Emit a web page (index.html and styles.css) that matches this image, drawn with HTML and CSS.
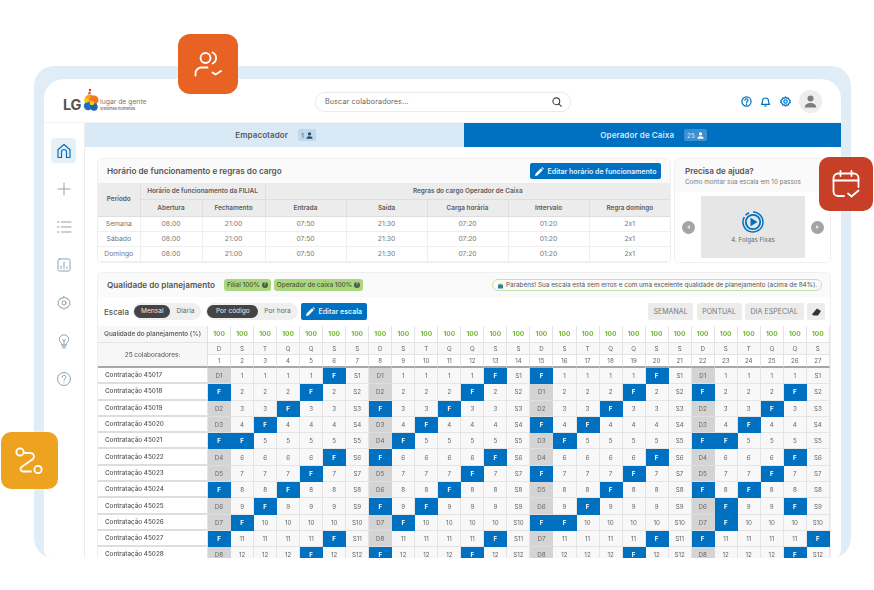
FILE: index.html
```html
<!DOCTYPE html>
<html lang="pt-BR">
<head>
<meta charset="utf-8">
<title>LG lugar de gente - Escala</title>
<link rel="stylesheet" href="styles.css">
</head>
<body>
<div class="stage">
  <div class="float float-orange">
    <svg width="29" height="26" viewBox="0 0 29 26" class="ico-w"><circle cx="11.5" cy="7" r="5"/><path d="M18.5 1.5a6 6 0 0 1 0 11"/><path d="M1.5 24.5v-2a6 6 0 0 1 6-6h6"/><path d="M18.5 21.5l3 2 5.5-3.5"/></svg>
  </div>
  <div class="float float-red">
    <svg width="29" height="29" viewBox="0 0 29 29" class="ico-w"><path d="M12 26H6a4.500 4.500 0 0 1-4.500-4.500V8A4.500 4.500 0 0 1 6 3.500h16A4.500 4.500 0 0 1 26.500 8v9"/><path d="M1.500 10.500h25"/><path d="M8.500 1v5M19.500 1v5"/><path d="M16 23.500l3.500 3 7-6"/></svg>
  </div>
  <div class="float float-yellow">
    <svg width="28" height="28" viewBox="0 0 28 28" class="ico-w"><circle cx="5" cy="5" r="3.700"/><circle cx="23" cy="22.500" r="3.700"/><path d="M10 6h5.500a3.500 3.500 0 0 1 2.500 6L6.500 20a2.500 2.500 0 0 0 1.500 4.500H16"/></svg>
  </div>

  <div class="frame">
    <div class="app">
      <header class="top">
        <div class="logo">
          <span class="lg">LG</span>
          <svg class="blob" width="17" height="24" viewBox="0 0 17 24"><circle cx="7" cy="2" r="1.200" fill="#c8372d"/><circle cx="6.500" cy="5" r="1.300" fill="#d9534a"/><circle cx="6" cy="8" r="1.500" fill="#e9482a"/><circle cx="7" cy="12" r="5.500" fill="#f6a313"/><circle cx="11" cy="12" r="4.500" fill="#f0771f"/><circle cx="5" cy="18" r="4.200" fill="#1f6fc0"/><circle cx="11" cy="19" r="3.700" fill="#1a64ad"/><circle cx="9" cy="15" r="2.300" fill="#f7c519"/><circle cx="3.500" cy="12.500" r="2.300" fill="#f8c81e"/></svg>
          <div class="logo-txt"><span class="lg-a">lugar de gente</span><span class="lg-b">sistemas humanos</span></div>
        </div>
        <div class="search">
          <span>Buscar colaboradores...</span>
          <svg width="10" height="10" viewBox="0 0 10 10" class="ico-dark"><circle cx="4.300" cy="4.300" r="3.400"/><path d="M6.800 6.800L9.300 9.300"/></svg>
        </div>
        <div class="top-right">
          <svg width="11" height="11" viewBox="0 0 11 11" class="ico-blue"><circle cx="5.500" cy="5.500" r="4.600"/><path d="M4 4.300a1.500 1.500 0 1 1 2.300 1.300c-.5.300-.8.600-.8 1.100"/><path d="M5.500 8.100v.3"/></svg>
          <svg width="11" height="11" viewBox="0 0 11 11" class="ico-blue"><path d="M1.500 8.300c1-.8 1-1.800 1-3.300a3 3 0 0 1 6 0c0 1.500 0 2.500 1 3.300z"/><path d="M4.500 10h2"/></svg>
          <svg width="11" height="11" viewBox="0 0 11 11" class="ico-blue"><circle cx="5.500" cy="5.500" r="1.700"/><path d="M5.500.8l1 1.300 1.700-.2.600 1.600 1.500.9-.6 1.100.6 1.100-1.500.9-.6 1.600-1.700-.2-1 1.300-1-1.300-1.700.2-.6-1.600-1.500-.9.600-1.100-.6-1.100 1.500-.9.600-1.600 1.700.2z"/></svg>
          <div class="avatar"><svg width="13" height="13" viewBox="0 0 13 13" fill="#7d7d7d"><circle cx="6.500" cy="3.500" r="3"/><path d="M.8 12.500c0-3 2.500-4.500 5.700-4.500s5.700 1.500 5.700 4.500z"/></svg></div>
        </div>
      </header>

      <nav class="side">
        <div class="nav-btn on"><svg width="16" height="16" viewBox="0 0 16 16" class="ico-nav-on"><path d="M2 14.500V6.800L8 1.500l6 5.300v7.700h-3.500V9a2.500 2.500 0 0 0-5 0v5.500z"/></svg></div>
        <div class="nav-btn"><svg width="16" height="16" viewBox="0 0 16 16" class="ico-nav"><path d="M8 2v12M2 8h12"/></svg></div>
        <div class="nav-btn"><svg width="16" height="16" viewBox="0 0 16 16" class="ico-nav"><path d="M5.500 3H15M5.500 8H15M5.500 13H15M1.500 3h1.500M1.500 8h1.500M1.500 13h1.500"/></svg></div>
        <div class="nav-btn"><svg width="16" height="16" viewBox="0 0 16 16" class="ico-nav"><rect x="2" y="2" width="12" height="12" rx="1.500"/><path d="M5 11.500V9M8 11.500V5M11 11.500V10"/></svg></div>
        <div class="nav-btn"><svg width="16" height="16" viewBox="0 0 16 16" class="ico-nav"><circle cx="8" cy="8" r="2"/><path d="M8 1.500l1.300 1.800 2.200-.3.800 2.100 1.900 1.200L13.400 8l.8 1.700-1.900 1.200-.8 2.100-2.200-.3L8 14.500l-1.300-1.800-2.200.3-.8-2.100-1.900-1.200L2.600 8l-.8-1.700 1.900-1.200.8-2.100 2.200.3z"/></svg></div>
        <div class="nav-btn"><svg width="16" height="16" viewBox="0 0 16 16" class="ico-nav"><path d="M5.500 11.500v-1.300C4.200 9.300 3.300 8 3.300 6.500a4.700 4.700 0 0 1 9.400 0c0 1.500-.9 2.800-2.200 3.700v1.300z"/><path d="M6 13.200h4M6.800 15h2.400M6.500 6.500L8 8l1.500-1.500M8 8v3.500"/></svg></div>
        <div class="nav-btn"><svg width="16" height="16" viewBox="0 0 16 16" class="ico-nav"><circle cx="8" cy="8" r="6.500"/><path d="M6 6.200a2 2 0 1 1 3 1.700c-.7.400-1 .8-1 1.500"/><path d="M8 11.300v.4"/></svg></div>
      </nav>

      <main class="main">
        <div class="tabs">
          <div class="tab">Empacotador <span class="tab-badge">1 <svg width="7" height="7" viewBox="0 0 13 13" fill="#33475a"><circle cx="6.500" cy="3.500" r="3"/><path d="M.8 12.500c0-3 2.500-4.500 5.700-4.500s5.700 1.500 5.700 4.500z"/></svg></span></div>
          <div class="tab active">Operador de Caixa <span class="tab-badge">25 <svg width="7" height="7" viewBox="0 0 13 13" fill="#fff"><circle cx="6.500" cy="3.500" r="3"/><path d="M.8 12.500c0-3 2.500-4.500 5.700-4.500s5.700 1.500 5.700 4.500z"/></svg></span></div>
        </div>

        <div class="content">
          <div class="row-top">
            <section class="card">
              <div class="card-head h25">
                <h2>Horário de funcionamento e regras do cargo</h2>
                <button class="btn-blue wide"><svg width="9" height="9" viewBox="0 0 9 9" fill="#fff"><path d="M0 9l.6-2.400L6 1.200 7.800 3 2.400 8.400zM6.600.6L7.200 0 9 1.800l-.6.600z"/></svg>Editar horário de funcionamento</button>
              </div>
              <table class="rules">
                <colgroup><col class="c42"><col class="c62"><col class="c63"><col class="c81"><col class="c81"><col class="c81"><col class="c81"><col class="c81"></colgroup>
                <thead>
                  <tr><th rowspan="2">Período</th><th colspan="2">Horário de funcionamento da FILIAL</th><th colspan="5">Regras do cargo Operador de Caixa</th></tr>
                  <tr class="tall"><th>Abertura</th><th>Fechamento</th><th>Entrada</th><th>Saída</th><th>Carga horária</th><th>Intervalo</th><th>Regra domingo</th></tr>
                </thead>
                <tbody>
                  <tr><td>Semana</td><td>08:00</td><td>21:00</td><td>07:50</td><td>21:30</td><td>07:20</td><td>01:20</td><td>2x1</td></tr>
                  <tr><td>Sábado</td><td>08:00</td><td>21:00</td><td>07:50</td><td>21:30</td><td>07:20</td><td>01:20</td><td>2x1</td></tr>
                  <tr><td>Domingo</td><td>08:00</td><td>21:00</td><td>07:50</td><td>21:30</td><td>07:20</td><td>01:20</td><td>2x1</td></tr>
                </tbody>
              </table>
            </section>

            <section class="card help">
              <div class="help-head">
                <h3>Precisa de ajuda?</h3>
                <p>Como montar sua escala em 10 passos</p>
              </div>
              <div class="carousel">
                <span class="arrow"><i class="tri-l"></i></span>
                <div class="slide">
                  <svg width="22" height="22" viewBox="0 0 22 22"><path d="M11 1a10 10 0 1 1-8.700 5" fill="none" stroke="#0070c0" stroke-width="1.500"/><path d="M3.500 4.300A10 10 0 0 1 7 1.800" fill="none" stroke="#0070c0" stroke-width="1.500"/><circle cx="11" cy="11" r="7.200" fill="none" stroke="#0070c0" stroke-width="1.800"/><path d="M8.500 6.800v8.400L15.500 11z" fill="#0070c0"/></svg>
                  <span>4. Folgas Fixas</span>
                </div>
                <span class="arrow"><i class="tri-r"></i></span>
              </div>
            </section>
          </div>

          <section class="card plan">
            <div class="card-head h24">
              <h2 class="plan-title">Qualidade do planejamento</h2>
              <span class="pill-green">Filial 100% <i class="dot">?</i></span>
              <span class="pill-green">Operador de caixa 100% <i class="dot">?</i></span>
              <span class="msg"><svg width="7" height="7" viewBox="0 0 7 7"><path d="M1 3h5v3.500H1z" fill="#2b7fb8"/><path d="M1 3c.5-1.800 4.500-1.800 5 0z" fill="#7fb04a"/></svg>Parabéns! Sua escala está sem erros e com uma excelente qualidade de planejamento (acima de 84%).</span>
            </div>
            <div class="toolbar">
              <span class="tb-label">Escala</span>
              <div class="toggle"><span class="tg on">Mensal</span><span class="tg">Diária</span></div>
              <div class="toggle second"><span class="tg on">Por código</span><span class="tg">Por hora</span></div>
              <button class="btn-blue esc"><svg width="9" height="9" viewBox="0 0 9 9" fill="#fff"><path d="M0 9l.6-2.400L6 1.200 7.800 3 2.400 8.400zM6.600.6L7.200 0 9 1.800l-.6.600z"/></svg>Editar escala</button>
              <div class="tb-right">
                <button class="btn-gray">SEMANAL</button>
                <button class="btn-gray">PONTUAL</button>
                <button class="btn-gray">DIA ESPECIAL</button>
                <button class="btn-gray eraser"><svg width="9" height="8" viewBox="0 0 9 8" fill="#333"><path d="M5 .5L9 3 6 7.500H1.500L0 6.300z"/></svg></button>
              </div>
            </div>

            <div class="grid">
              <div class="lbl">Qualidade do planejamento (%)</div>
              <div class="p">100</div><div class="p">100</div><div class="p">100</div><div class="p">100</div><div class="p">100</div><div class="p">100</div><div class="p">100</div><div class="p">100</div><div class="p">100</div><div class="p">100</div><div class="p">100</div><div class="p">100</div><div class="p">100</div><div class="p">100</div><div class="p">100</div><div class="p">100</div><div class="p">100</div><div class="p">100</div><div class="p">100</div><div class="p">100</div><div class="p">100</div><div class="p">100</div><div class="p">100</div><div class="p">100</div><div class="p">100</div><div class="p">100</div><div class="p">100</div>

              <div class="lbl cnt">25 colaboradores:</div>
              <div>D</div><div>S</div><div>T</div><div>Q</div><div>Q</div><div>S</div><div>S</div><div>D</div><div>S</div><div>T</div><div>Q</div><div>Q</div><div>S</div><div>S</div><div>D</div><div>S</div><div>T</div><div>Q</div><div>Q</div><div>S</div><div>S</div><div>D</div><div>S</div><div>T</div><div>Q</div><div>Q</div><div>S</div>
              <div class="n">1</div><div class="n">2</div><div class="n">3</div><div class="n">4</div><div class="n">5</div><div class="n">6</div><div class="n">7</div><div class="n">8</div><div class="n">9</div><div class="n">10</div><div class="n">11</div><div class="n">12</div><div class="n">13</div><div class="n">14</div><div class="n">15</div><div class="n">16</div><div class="n">17</div><div class="n">18</div><div class="n">19</div><div class="n">20</div><div class="n">21</div><div class="n">22</div><div class="n">23</div><div class="n">24</div><div class="n">25</div><div class="n">26</div><div class="n">27</div>

              <div class="name">Contratação 45017</div>
              <div class="d">D1</div><div>1</div><div>1</div><div>1</div><div>1</div><div class="f">F</div><div>S1</div><div class="d">D1</div><div>1</div><div>1</div><div>1</div><div>1</div><div class="f">F</div><div>S1</div><div class="f">F</div><div>1</div><div>1</div><div>1</div><div>1</div><div class="f">F</div><div>S1</div><div class="d">D1</div><div>1</div><div>1</div><div>1</div><div>1</div><div>S1</div>

              <div class="name">Contratação 45018</div>
              <div class="f">F</div><div>2</div><div>2</div><div>2</div><div class="f">F</div><div>2</div><div>S2</div><div class="d">D2</div><div>2</div><div>2</div><div>2</div><div class="f">F</div><div>2</div><div>S2</div><div class="d">D1</div><div>2</div><div>2</div><div>2</div><div class="f">F</div><div>2</div><div>S2</div><div class="f">F</div><div>2</div><div>2</div><div>2</div><div class="f">F</div><div>S2</div>

              <div class="name">Contratação 45019</div>
              <div class="d">D2</div><div>3</div><div>3</div><div class="f">F</div><div>3</div><div>3</div><div>S3</div><div class="f">F</div><div>3</div><div>3</div><div class="f">F</div><div>3</div><div>3</div><div>S3</div><div class="d">D2</div><div>3</div><div>3</div><div class="f">F</div><div>3</div><div>3</div><div>S3</div><div class="d">D2</div><div>3</div><div>3</div><div class="f">F</div><div>3</div><div>S3</div>

              <div class="name">Contratação 45020</div>
              <div class="d">D3</div><div>4</div><div class="f">F</div><div>4</div><div>4</div><div>4</div><div>S4</div><div class="d">D3</div><div>4</div><div class="f">F</div><div>4</div><div>4</div><div>4</div><div>S4</div><div class="f">F</div><div>4</div><div class="f">F</div><div>4</div><div>4</div><div>4</div><div>S4</div><div class="d">D3</div><div>4</div><div class="f">F</div><div>4</div><div>4</div><div>S4</div>

              <div class="name">Contratação 45021</div>
              <div class="f">F</div><div class="f">F</div><div>5</div><div>5</div><div>5</div><div>5</div><div>S5</div><div class="d">D4</div><div class="f">F</div><div>5</div><div>5</div><div>5</div><div>5</div><div>S5</div><div class="d">D3</div><div class="f">F</div><div>5</div><div>5</div><div>5</div><div>5</div><div>S5</div><div class="f">F</div><div class="f">F</div><div>5</div><div>5</div><div>5</div><div>S5</div>

              <div class="name">Contratação 45022</div>
              <div class="d">D4</div><div>6</div><div>6</div><div>6</div><div>6</div><div class="f">F</div><div>S6</div><div class="f">F</div><div>6</div><div>6</div><div>6</div><div>6</div><div class="f">F</div><div>S6</div><div class="d">D4</div><div>6</div><div>6</div><div>6</div><div>6</div><div class="f">F</div><div>S6</div><div class="d">D4</div><div>6</div><div>6</div><div>6</div><div class="f">F</div><div>S6</div>

              <div class="name">Contratação 45023</div>
              <div class="d">D5</div><div>7</div><div>7</div><div>7</div><div class="f">F</div><div>7</div><div>S7</div><div class="d">D5</div><div>7</div><div>7</div><div>7</div><div class="f">F</div><div>7</div><div>S7</div><div class="f">F</div><div>7</div><div>7</div><div>7</div><div class="f">F</div><div>7</div><div>S7</div><div class="d">D5</div><div>7</div><div>7</div><div class="f">F</div><div>7</div><div>S7</div>

              <div class="name">Contratação 45024</div>
              <div class="f">F</div><div>8</div><div>8</div><div class="f">F</div><div>8</div><div>8</div><div>S8</div><div class="d">D6</div><div>8</div><div>8</div><div class="f">F</div><div>8</div><div>8</div><div>S8</div><div class="d">D5</div><div>8</div><div>8</div><div class="f">F</div><div>8</div><div>8</div><div>S8</div><div class="f">F</div><div>8</div><div class="f">F</div><div>8</div><div>8</div><div>S8</div>

              <div class="name">Contratação 45025</div>
              <div class="d">D6</div><div>9</div><div class="f">F</div><div>9</div><div>9</div><div>9</div><div>S9</div><div class="f">F</div><div>9</div><div class="f">F</div><div>9</div><div>9</div><div>9</div><div>S9</div><div class="d">D6</div><div>9</div><div class="f">F</div><div>9</div><div>9</div><div>9</div><div>S9</div><div class="d">D6</div><div class="f">F</div><div>9</div><div>9</div><div class="f">F</div><div>S9</div>

              <div class="name">Contratação 45026</div>
              <div class="d">D7</div><div class="f">F</div><div>10</div><div>10</div><div>10</div><div>10</div><div>S10</div><div class="d">D7</div><div class="f">F</div><div>10</div><div>10</div><div>10</div><div>10</div><div>S10</div><div class="f">F</div><div class="f">F</div><div>10</div><div>10</div><div>10</div><div>10</div><div>S10</div><div class="d">D7</div><div class="f">F</div><div>10</div><div>10</div><div>10</div><div>S10</div>

              <div class="name">Contratação 45027</div>
              <div class="f">F</div><div>11</div><div>11</div><div>11</div><div>11</div><div class="f">F</div><div>S11</div><div class="d">D8</div><div>11</div><div>11</div><div>11</div><div>11</div><div class="f">F</div><div>S11</div><div class="d">D7</div><div>11</div><div>11</div><div>11</div><div>11</div><div class="f">F</div><div>S11</div><div class="f">F</div><div>11</div><div>11</div><div>11</div><div>11</div><div class="f">F</div>

              <div class="name">Contratação 45028</div>
              <div class="d">D8</div><div>12</div><div>12</div><div>12</div><div class="f">F</div><div>12</div><div>S12</div><div class="f">F</div><div>12</div><div>12</div><div>12</div><div class="f">F</div><div>12</div><div>S12</div><div class="d">D8</div><div>12</div><div>12</div><div>12</div><div class="f">F</div><div>12</div><div>S12</div><div class="d">D8</div><div>12</div><div>12</div><div>12</div><div class="f">F</div><div>S12</div>
            </div>
          </section>
        </div>
      </main>
    </div>
  </div>
</div>
</body>
</html>
```
FILE: styles.css
```css
* { box-sizing: border-box; }
html, body { margin: 0; padding: 0; background: #fff; overflow: hidden; }
body { width: 874px; height: 590px; font-family: "Inter", "Liberation Sans", sans-serif; font-feature-settings: "calt" 0; color: #555; }
h2, h3, p { margin: 0; }
button { font-family: inherit; font-feature-settings: inherit; border: 0; padding: 0; }
svg { display: block; flex: none; }

.stage { position: relative; width: 874px; height: 590px; padding: 66px 23px 32px 34px; filter: blur(.4px); }
.frame { height: 492px; background: #e0edf6; border-radius: 20px; padding: 13px 10px 0; overflow: hidden; }
.app { height: 479px; background: #fff; border-radius: 20px 20px 8px 8px; overflow: hidden; display: grid; grid-template-columns: 41px 1fr; grid-template-rows: 44px 1fr; }

.float { position: absolute; z-index: 5; display: flex; align-items: center; justify-content: center; border-radius: 10px; box-shadow: 0 0 0 1px rgba(255,255,255,.3); }
.float-orange { left: 178px; top: 33.5px; width: 60px; height: 60px; background: #e86224; border-radius: 12px; }
.float-red { left: 819px; top: 157px; width: 54px; height: 54px; background: #c63f26; }
.float-yellow { left: 1px; top: 432px; width: 56.500px; height: 57px; background: #eea320; }
.ico-w { fill: none; stroke: #fff; stroke-width: 1.8; stroke-linecap: round; stroke-linejoin: round; }
.ico-dark { fill: none; stroke: #444; stroke-width: 1.1; stroke-linecap: round; }
.ico-blue { fill: none; stroke: #0070c0; stroke-width: 1.2; stroke-linecap: round; stroke-linejoin: round; }
.ico-nav { fill: none; stroke: #8ba3ae; stroke-width: 1; stroke-linecap: round; stroke-linejoin: round; }
.ico-nav-on { fill: none; stroke: #0070c0; stroke-width: 1.2; stroke-linejoin: round; }

.top { grid-column: 1 / 3; display: grid; grid-template-columns: 1fr 256px 1fr; align-items: center; padding: 2px 19px 0 20px; border-bottom: 1px solid #f3f3f3; }
.logo { display: flex; align-items: flex-end; height: 26px; margin-left: -1px; margin-top: -2px; }
.lg { font-weight: 700; font-size: 14.5px; line-height: 16px; color: #555; letter-spacing: -.3px; margin-right: 2px; margin-bottom: 1px; }
.blob { margin-bottom: 2px; }
.logo-txt { display: flex; flex-direction: column; margin-bottom: 2px; }
.lg-a { font-size: 6.8px; line-height: 9px; color: #777; }
.lg-b { font-size: 3.9px; line-height: 6px; color: #777; font-weight: 600; }
.search { height: 20px; display: flex; align-items: center; justify-content: space-between; padding: 0 8px 0 9px; border: 1px solid #eaeaea; border-radius: 10px; box-shadow: 0 0 2px rgba(0,0,0,.06); font-size: 7.2px; letter-spacing: .12px; color: #666; }
.top-right { display: flex; align-items: center; justify-content: flex-end; gap: 8.5px; }
.avatar { width: 23px; height: 23px; border-radius: 50%; background: #ededed; display: flex; align-items: center; justify-content: center; }

.side { border-right: 1px solid #ededed; padding: 15px 8px 0 7px; display: flex; flex-direction: column; gap: 13px; }
.nav-btn { width: 25px; height: 25px; display: flex; align-items: center; justify-content: center; border-radius: 4px; flex: none; }
.nav-btn.on { background: #e5f1f6; }

.main { min-width: 0; overflow: hidden; }
.tabs { display: grid; grid-template-columns: 379px 377px; height: 24px; }
.tab { display: flex; align-items: center; justify-content: center; gap: 10px; padding-left: 2px; background: #d9e9f6; font-size: 8px; font-weight: 600; color: #5a5a5a; letter-spacing: .1px; }
.tab.active { background: #0070c0; color: #d5e7f5; }
.tab-badge { display: inline-flex; align-items: center; gap: 2px; height: 12px; padding: 0 3px; border-radius: 2px; background: #bcd9f0; font-size: 6px; font-weight: 500; color: #4a6a85; }
.tab.active .tab-badge { background: #3a90d0; color: #d5e7f5; }

.content { padding: 12px 11px 0 13px; }
.row-top { display: grid; grid-template-columns: 572px 155px; gap: 5px; }
.card { background: #fff; border-radius: 4px; box-shadow: 0 0 0 1px #f0f0f0; overflow: hidden; }
.card-head { display: flex; align-items: center; background: #fafafa; padding: 0 9px; }
.h25 { height: 24px; justify-content: space-between; }
.h24 { height: 24px; }
.card-head h2 { font-size: 8.2px; font-weight: 600; color: #555; letter-spacing: 0; }
.btn-blue { display: flex; align-items: center; justify-content: center; gap: 4px; height: 16px; background: #0070c0; color: #e4f0fa; border-radius: 2px; font-size: 7px; font-weight: 600; }
.wide { width: 131px; }
.esc { width: 66px; height: 17px; }

.rules { width: 572px; border-collapse: collapse; table-layout: fixed; font-size: 6.4px; }
.c42 { width: 42px; } .c62 { width: 62px; } .c63 { width: 63px; } .c81 { width: 81px; }
.rules th { background: #ececec; border: 1px solid #dedede; height: 16px; padding: 0; font-weight: 600; color: #5c5c5c; }
.rules .tall th { height: 17px; }
.rules th:first-child { border-left: 0; }
.rules tr:first-child th { border-top: 0; }
.rules th:last-child { border-right: 0; }
.rules td { height: 15px; padding: 0; text-align: center; color: #777; border: 1px solid #efefef; font-size: 6.8px; }
.rules td:first-child { border-left: 0; }
.rules td:last-child { border-right: 0; }

.help { display: flex; flex-direction: column; height: 103px; }
.help-head { height: 33px; background: #fafafa; padding: 7px 10px 0; }
.help-head h3 { font-size: 8.1px; line-height: 11px; font-weight: 600; color: #555; }
.help-head p { font-size: 6.2px; line-height: 10px; color: #777; letter-spacing: .05px; }
.carousel { display: flex; align-items: center; justify-content: space-between; padding: 3px 6px 3px 7px; flex: 1; }
.slide { width: 104px; height: 62px; background: #e6e6e6; display: flex; flex-direction: column; align-items: center; padding-top: 15px; gap: 3px; font-size: 6.2px; color: #666; }
.arrow { width: 13px; height: 13px; border-radius: 50%; background: #a4a4a4; display: flex; align-items: center; justify-content: center; }
.tri-l, .tri-r { width: 0; height: 0; border-top: 2.500px solid transparent; border-bottom: 2.500px solid transparent; }
.tri-l { border-right: 3.500px solid #e6e6e6; }
.tri-r { border-left: 3.500px solid #e6e6e6; }

.plan { margin-top: 11px; }
.plan .h24 { padding-right: 8px; }
.plan-title { margin-right: 9px; }
.pill-green { display: inline-flex; align-items: center; gap: 2px; height: 12px; padding: 0 3px; margin-right: 3px; border-radius: 3px; background: #a9d67e; font-size: 6.4px; font-weight: 500; color: #45592f; }
.dot { width: 6px; height: 6px; border-radius: 50%; background: #4f5a46; color: #a9d67e; font-style: normal; font-size: 4.5px; line-height: 6px; text-align: center; font-weight: 700; }
.msg { margin-left: auto; display: inline-flex; align-items: center; gap: 2px; height: 12px; width: 330px; padding: 0 0 0 4px; border: 1px solid #c6e2aa; border-radius: 6px; font-size: 6.37px; white-space: nowrap; color: #555; }

.toolbar { height: 29px; display: flex; align-items: center; padding: 0 5px 0 6px; }
.tb-label { font-size: 8px; font-weight: 500; color: #555; width: 29px; }
.toggle { display: flex; align-items: center; height: 17px; padding: 0 1px; border-radius: 9px; background: #efefef; margin-right: 5px; font-size: 6.6px; color: #666; }
.toggle.second { margin-right: 3px; }
.tg { padding: 0 6px; line-height: 13px; height: 13px; border-radius: 7px; }
.tg.on { background: #444; color: #e8e8e8; padding: 0 7px; }
.second .tg.on { padding: 0 8.500px; }
.tb-right { margin-left: auto; display: flex; gap: 3.500px; }
.btn-gray { height: 17px; padding: 0 5.500px; border-radius: 2px; background: #ececec; color: #777; font-size: 7px; letter-spacing: .05px; }
.eraser { width: 18px; padding: 0; display: flex; align-items: center; justify-content: center; }

.grid { display: grid; grid-template-columns: 110px repeat(27, 23.037px); grid-template-rows: 17px 12px 13px; grid-auto-rows: 16.3px; font-size: 6.2px; color: #666; }
.grid > div { display: flex; align-items: center; justify-content: center; background: #f8f8f8; border-right: 1px solid #e4e4e4; border-bottom: 1px solid #e4e4e4; }
.grid > .lbl { background: #f7f7f7; font-weight: 600; font-size: 6.4px; color: #666; border-right: 1px solid #e0e0e0; }
.grid > .cnt { grid-row: span 2; border-bottom: 2px solid #a8a8a8; font-weight: 500; }
.grid > .p { color: #74b335; font-weight: 700; font-size: 6.6px; background: #fff; }
.grid > .n { border-bottom: 2px solid #a8a8a8; background: #fff; }
.grid > .name { justify-content: flex-start; padding-left: 7px; background: #fff; border-bottom: 2px solid #dedede; font-size: 6.3px; font-weight: 500; color: #555; }
.grid > .d { background: #d4d4d4; border-color: #d4d4d4; border-bottom-color: #dedede; color: #666; }
.grid > .f { background: #0070c0; border-color: #0070c0; color: #fff; font-weight: 700; }
```
